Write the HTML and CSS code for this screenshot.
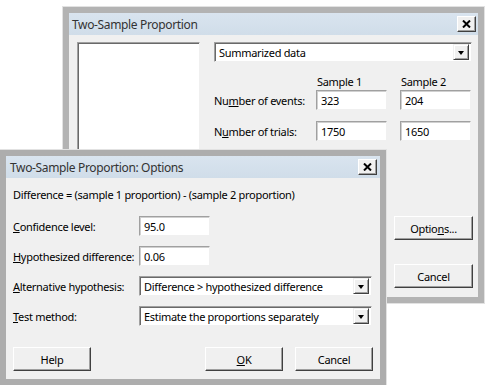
FILE: index.html
```html
<!DOCTYPE html>
<html lang="en">
<head>
  <meta charset="UTF-8" />
  <title>Two-Sample Proportion</title>
  <link rel="stylesheet" href="styles.css">
</head>
<body>

<!-- main dialog (behind) -->
<div class="window main">
  <div class="titlebar">
    <span class="title">Two-Sample Proportion</span>
    <span class="close"><svg width="9" height="8" viewBox="0 0 9 8"><path d="M1 0.5 L8 7.5 M8 0.5 L1 7.5" stroke="#000" stroke-width="2"/></svg></span>
  </div>
  <div class="main-body">
    <div class="listbox"></div>
    <div class="main-right">
      <div class="select">
        <span class="select-text">Summarized data</span>
        <span class="arrow"></span>
      </div>
      <div class="samples">
        <span></span>
        <span class="head">Sample 1</span>
        <span class="head">Sample 2</span>
        <label>Nu<u>m</u>ber of events:</label>
        <input class="field" type="text" value="323">
        <input class="field" type="text" value="204">
        <label>N<u>u</u>mber of trials:</label>
        <input class="field" type="text" value="1750">
        <input class="field" type="text" value="1650">
      </div>
      <div class="side-buttons">
        <button class="btn">Optio<u>n</u>s...</button>
        <button class="btn">Cancel</button>
      </div>
    </div>
  </div>
</div>

<!-- options dialog (front) -->
<div class="window options">
  <div class="titlebar">
    <span class="title">Two-Sample Proportion: Options</span>
    <span class="close"><svg width="9" height="8" viewBox="0 0 9 8"><path d="M1 0.5 L8 7.5 M8 0.5 L1 7.5" stroke="#000" stroke-width="2"/></svg></span>
  </div>
  <div class="options-body">
    <p class="note">Difference = (sample 1 proportion) - (sample 2 proportion)</p>
    <div class="form">
      <label><u>C</u>onfidence level:</label>
      <input class="field short" type="text" value="95.0">
      <label><u>H</u>ypothesized difference:</label>
      <input class="field short" type="text" value="0.06">
      <label><u>A</u>lternative hypothesis:</label>
      <div class="select">
        <span class="select-text">Difference &gt; hypothesized difference</span>
        <span class="arrow"></span>
      </div>
      <label><u>T</u>est method:</label>
      <div class="select">
        <span class="select-text">Estimate the proportions separately</span>
        <span class="arrow"></span>
      </div>
    </div>
    <div class="bottom-buttons">
      <button class="btn">Help</button>
      <span class="spacer"></span>
      <button class="btn"><u>O</u>K</button>
      <button class="btn">Cancel</button>
    </div>
  </div>
</div>

</body>
</html>
```

FILE: styles.css
```css
* { box-sizing: border-box; }

body {
  margin: 0;
  width: 490px;
  height: 385px;
  position: relative;
  overflow: hidden;
  background: #fff;
  font-family: "Noto Sans", "Liberation Sans", sans-serif;
  font-size: 11px;
  letter-spacing: -0.3px;
  color: #000;
}

u { text-decoration: underline; text-underline-offset: 1px; }

label { white-space: nowrap; }

/* windows */
.window {
  position: absolute;
  display: flex;
  flex-direction: column;
  background: #f0f0f0;
  border: 6px solid #b3b3b3;
  box-shadow: 0 0 0 1px #e2e2e2;
}

.main {
  left: 63px;
  top: 7px;
  width: 421px;
  height: 296px;
}

.options {
  left: 0;
  top: 150px;
  width: 386px;
  height: 235px;
  border-color: #adadad;
}

.titlebar {
  height: 22px;
  flex: none;
  display: flex;
  align-items: center;
  justify-content: space-between;
  padding: 0 2px 0 3px;
  background: linear-gradient(#d9e4ef, #d0dde9);
}

.options .titlebar { padding: 0 3px 0 4px; }

.title {
  font-size: 12px;
  letter-spacing: -0.35px;
  color: #333;
}

.close {
  width: 19px;
  height: 16px;
  display: flex;
  align-items: center;
  justify-content: center;
  background: #f0f0f0;
  border: 1px solid;
  border-color: #fff #404040 #404040 #fff;
  box-shadow: inset -1px -1px #a0a0a0;
}

/* common controls */
.field {
  height: 20px;
  margin: 0;
  padding: 0 4px;
  font: inherit;
  letter-spacing: inherit;
  background: #fff;
  border: 1px solid;
  border-color: #a0a0a0 #f0f0f0 #f0f0f0 #a0a0a0;
  box-shadow: inset 1px 1px #d0d0d0;
  outline: none;
}

.select {
  height: 20px;
  display: flex;
  align-items: center;
  padding: 0 2px 0 4px;
  background: #fff;
  border: 1px solid;
  border-color: #a0a0a0 #f0f0f0 #f0f0f0 #a0a0a0;
  box-shadow: inset 1px 1px #696969;
}

.select-text { flex: 1; white-space: nowrap; }

.arrow {
  width: 16px;
  height: 16px;
  flex: none;
  display: flex;
  align-items: center;
  justify-content: center;
  background: #f0f0f0;
  border: 1px solid;
  border-color: #f0f0f0 #404040 #404040 #f0f0f0;
  box-shadow: inset 1px 1px #fff, inset -1px -1px #a0a0a0;
}

.arrow::after {
  content: "";
  border-left: 3.5px solid transparent;
  border-right: 3.5px solid transparent;
  border-top: 4px solid #000;
  margin-top: 1px;
}

.btn {
  width: 79px;
  height: 24px;
  padding: 0;
  font: inherit;
  letter-spacing: inherit;
  color: #000;
  background: #f0f0f0;
  border: 1px solid;
  border-color: #fff #404040 #404040 #fff;
  box-shadow: inset -1px -1px #a0a0a0;
}

/* main dialog content */
.main-body {
  flex: 1;
  display: flex;
  gap: 14px;
  padding: 7px 6px 0 8px;
}

.listbox {
  flex: none;
  width: 123px;
  height: 260px;
  background: #fff;
  border: 1px solid;
  border-color: #a0a0a0 #f0f0f0 #f0f0f0 #a0a0a0;
  box-shadow: inset 1px 1px #696969;
}

.main-right {
  flex: 1;
  min-width: 0;
  display: flex;
  flex-direction: column;
}

.samples {
  display: grid;
  grid-template-columns: 89px 71px 71px;
  column-gap: 13px;
  row-gap: 11px;
  align-items: center;
  margin-top: 12px;
}

.samples .head {
  margin-bottom: -10px;
  padding-left: 1px;
}

.side-buttons {
  display: flex;
  flex-direction: column;
  align-items: flex-end;
  gap: 24px;
  margin-top: 75px;
  margin-right: -1px;
}

/* options dialog content */
.options-body {
  flex: 1;
  padding: 0 7px;
}

.note {
  margin: 10px 0 0;
  line-height: 14px;
}

.form {
  display: grid;
  grid-template-columns: 126px 233px;
  row-gap: 10px;
  align-items: center;
  justify-items: start;
  margin-top: 14px;
}

.form .select { width: 233px; }

.short { width: 71px; }

.bottom-buttons {
  display: flex;
  gap: 12px;
  margin-top: 21px;
}

.bottom-buttons .btn { width: 78px; }

.spacer { flex: 1; }
```
